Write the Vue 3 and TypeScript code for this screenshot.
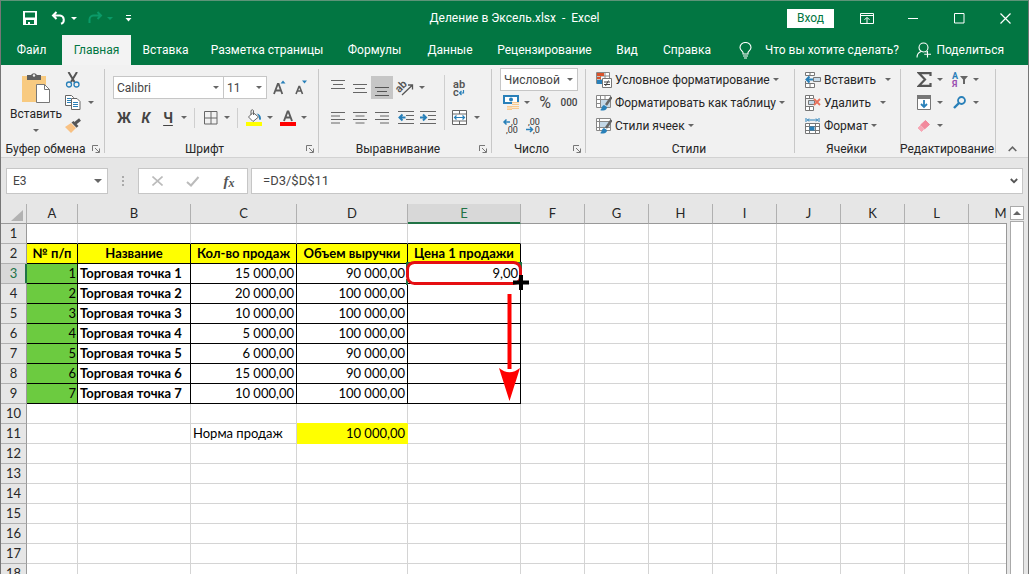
<script setup lang="ts">
import { ref } from 'vue'

interface Cell {
  text: string
  kind: string
}

const tabs: string[] = ['Файл', 'Главная', 'Вставка', 'Разметка страницы', 'Формулы', 'Данные', 'Рецензирование', 'Вид', 'Справка']
const activeTab = ref('Главная')
const nameBox = ref('E3')
const formula = ref('=D3/$D$11')

const columns: string[] = ['A', 'B', 'C', 'D', 'E', 'F', 'G', 'H', 'I', 'J', 'K', 'L', 'M']
const headings: string[] = ['№ п/п', 'Название', 'Кол-во продаж', 'Объем выручки', 'Цена 1 продажи']
const sales: [string, string][] = [
  ['15 000,00', '90 000,00'],
  ['20 000,00', '100 000,00'],
  ['10 000,00', '100 000,00'],
  ['5 000,00', '100 000,00'],
  ['6 000,00', '90 000,00'],
  ['15 000,00', '90 000,00'],
  ['10 000,00', '100 000,00'],
]

function cellAt(row: number, col: number): Cell {
  if (row === 1 && col < 5) return { text: '', kind: 'above' }
  if (row === 2 && col < 5) return { text: headings[col], kind: 'boxed heading' }
  if (row >= 3 && row <= 9 && col < 5) {
    const n = row - 2
    if (col === 0) return { text: String(n), kind: 'boxed index' }
    if (col === 1) return { text: `Торговая точка ${n}`, kind: 'boxed place' }
    if (col === 4) return { text: n === 1 ? '9,00' : '', kind: 'boxed number' }
    return { text: sales[n - 1][col - 2], kind: 'boxed number' }
  }
  if (row === 11 && col === 2) return { text: 'Норма продаж', kind: 'label' }
  if (row === 11 && col === 3) return { text: '10 000,00', kind: 'norm number' }
  if (row === 10 && col === 3) return { text: '', kind: 'abovenorm' }
  return { text: '', kind: '' }
}
</script>

<template>
  <div class="window">
    <header class="titlebar">
      <div class="quick">
        <button class="tool" aria-label="Сохранить">
          <svg width="14" height="14" viewBox="0 0 14 14"><path d="M0 0h14v14H0z M2 1.500v5h10v-5z M3 9v4h2v-2h2v2h4V9z" fill="#fff" fill-rule="evenodd" /></svg>
        </button>
        <button class="tool history" aria-label="Отменить">
          <svg width="16" height="14" viewBox="0 0 16 14"><path d="M5.500 1 2 4.500 5.500 8M2.500 4.500H9a4.300 4.300 0 0 1 1 8.300" fill="none" stroke="#fff" stroke-width="2" /></svg>
          <span class="caret light"></span>
        </button>
        <button class="tool history" aria-label="Повторить">
          <svg width="16" height="14" viewBox="0 0 16 14"><path d="M10.500 1 14 4.500 10.500 8M13.500 4.500H7a4.300 4.300 0 0 0-4.500 4V12" fill="none" stroke="#0b9a68" stroke-width="2" /></svg>
          <span class="caret faded"></span>
        </button>
        <button class="tool customise" aria-label="Настройка панели">
          <svg width="7" height="7" viewBox="0 0 7 7"><path d="M1 0h5v1H1zM0.500 3h6L3.500 6.500z" fill="#fff" /></svg>
        </button>
      </div>
      <div class="doc-title">Деление в Эксель.xlsx&nbsp; -&nbsp; Excel</div>
      <div class="controls">
        <button class="signin">Вход</button>
        <button class="wbtn" aria-label="Параметры ленты">
          <svg width="14" height="11" viewBox="0 0 14 11"><path d="M.5.5h13v10H.5zM.5 2.500h13M7 10V5M4.500 6.800 7 4.300l2.500 2.500" fill="none" stroke="#fff" /></svg>
        </button>
        <button class="wbtn" aria-label="Свернуть"><svg width="10" height="11"><path d="M0 5.500h10" stroke="#fff" /></svg></button>
        <button class="wbtn" aria-label="Развернуть"><svg width="11" height="11"><path d="M.5.5h9.500v9.500H.5z" fill="none" stroke="#fff" /></svg></button>
        <button class="wbtn" aria-label="Закрыть"><svg width="11" height="11"><path d="M.5.5l10 10M10.500.5l-10 10" stroke="#fff" stroke-width="1.200" /></svg></button>
      </div>
    </header>

    <div class="tabbar">
      <nav class="tabs">
        <button v-for="tab in tabs" :key="tab" class="tab" :class="{ active: tab === activeTab }" @click="activeTab = tab">{{ tab }}</button>
      </nav>
      <button class="tell">
        <svg width="13" height="17" viewBox="0 0 13 17"><path d="M4 12V10.500C3.500 9 1 8 1 5.500a5.500 5 0 0 1 11 0C12 8 9.500 9 9 10.500V12zM4 14h5M5 16h3" fill="none" stroke="#fff" stroke-width="1.100" /></svg>
        <span>Что вы хотите сделать?</span>
      </button>
      <button class="share">
        <svg width="16" height="16" viewBox="0 0 16 16"><circle cx="7.500" cy="5.500" r="4.500" fill="none" stroke="#fff" stroke-width="1.100" /><path d="M1 15.500c0-3 1.500-5 4-6M9.500 9.500l1 .7M11.500 9v6.500M8.200 12.300h6.800" fill="none" stroke="#fff" stroke-width="1.100" /></svg>
        <span>Поделиться</span>
      </button>
    </div>

    <div class="ribbon">
      <section class="group clipboard">
        <div class="body">
          <button class="paste">
            <svg width="28" height="30" viewBox="0 0 28 30"><path d="M0 3h24v26H0z" fill="#f8ca80" /><path d="M5 2h4a3.500 3.500 0 0 1 6 0h4v5H5z" fill="#5f5f5f" /><circle cx="12" cy="2.500" r="1.200" fill="#f1f1f1" /><path d="M14.500 11.500h8l5 5v13h-13z" fill="#fff" stroke="#777" /><path d="M22.500 11.500v5h5" fill="none" stroke="#777" /></svg>
            <span>Вставить</span>
            <span class="caret"></span>
          </button>
          <div class="stack">
            <div class="line">
              <button class="tool" aria-label="Вырезать"><svg width="16" height="16" viewBox="0 0 16 16"><path d="M3.500 0 9.500 10M12 0 6 10" stroke="#555" stroke-width="2" /><circle cx="4" cy="12.500" r="2.500" fill="none" stroke="#2980b9" stroke-width="1.300" /><circle cx="11.500" cy="12.500" r="2.500" fill="none" stroke="#2980b9" stroke-width="1.300" /></svg></button>
            </div>
            <div class="line">
              <button class="tool" aria-label="Копировать"><svg width="16" height="15" viewBox="0 0 16 15"><path d="M.5.5h6l2 2v8h-8z" fill="#fff" stroke="#666" /><path d="M2 3.500h4M2 5.500h4M2 7.500h4" stroke="#2980b9" /><path d="M6.500 3.500h5.500l3 3v8H6.500z" fill="#fff" stroke="#666" /><path d="M8 7.500h5M8 9.500h5M8 11.500h5" stroke="#2980b9" /></svg></button>
              <button class="drop" aria-label="Копировать: параметры"><span class="caret"></span></button>
            </div>
            <div class="line">
              <button class="tool" aria-label="Формат по образцу"><svg width="16" height="15" viewBox="0 0 16 15"><path d="M0 9 6 5l5 5-5 5z" fill="#f8c183" /><path d="M6.500 4.500 8.500 3l5 5-2 1.800z" fill="#555" /><path d="m10 5.500 5-4" stroke="#555" stroke-width="3" /></svg></button>
            </div>
          </div>
        </div>
        <div class="foot"><span>Буфер обмена</span><button class="launch" aria-label="Буфер обмена: параметры"><svg width="8" height="8" viewBox="0 0 8 8"><path d="M.5 6V.5H6M3 3l4 4M7.500 3.500v4h-4" fill="none" stroke="#777" /></svg></button></div>
      </section>

      <section class="group font">
        <div class="body rows">
          <div class="line">
            <label class="combo family"><select aria-label="Шрифт"><option>Calibri</option></select><span class="caret"></span></label>
            <label class="combo size"><select aria-label="Размер шрифта"><option>11</option></select><span class="caret"></span></label>
            <button class="tool" aria-label="Увеличить размер"><svg width="13" height="16" viewBox="0 0 13 16"><path d="M1 14 4.800 4h.8L9.300 14M2.500 10.500h5.500" fill="none" stroke="#5c5c5c" stroke-width="1.800" /><path d="M7.500 3.500 10 .5 12.500 3.500z" fill="#2980b9" /></svg></button>
            <button class="tool" aria-label="Уменьшить размер"><svg width="12" height="16" viewBox="0 0 12 16"><path d="M1 14 4 6.500h.600L7.500 14M2.300 11h4" fill="none" stroke="#5c5c5c" stroke-width="1.600" /><path d="M7 .5 9.500 3.500 12 .5z" fill="#2980b9" /></svg></button>
          </div>
          <div class="line">
            <button class="tool letter">Ж</button>
            <button class="tool letter italic">К</button>
            <button class="tool letter under">Ч</button>
            <button class="drop" aria-label="Подчёркивание"><span class="caret"></span></button>
            <i class="sep"></i>
            <button class="tool" aria-label="Границы"><svg width="14" height="14"><path d="M.5.5h12.500v12.500H.5zM7 0v13M0 7h13" fill="none" stroke="#666" /></svg></button>
            <button class="drop" aria-label="Виды границ"><span class="caret"></span></button>
            <i class="sep"></i>
            <button class="tool" aria-label="Цвет заливки"><svg width="16" height="17" viewBox="0 0 16 17"><path d="M7 3.500 12.500 8 7 12.500 2.500 8z" fill="#fff" stroke="#666" /><path d="M5 6V1.500q1.500-1.500 2.500 0V6" fill="none" stroke="#666" /><path d="M10.500 4.500Q15 5 15 10q-1 2-2 0 .5-3-2.500-5.500z" fill="#2980b9" /><path d="M0 13h16v4H0z" fill="#ff0" /></svg></button>
            <button class="drop" aria-label="Выбор заливки"><span class="caret"></span></button>
            <button class="tool late" aria-label="Цвет шрифта"><svg width="16" height="16" viewBox="0 0 16 16"><path d="M4 11 7.600 1.500h.8L12 11M5.300 7.500h5.400" fill="none" stroke="#5c5c5c" stroke-width="1.900" /><path d="M0 12h16v4H0z" fill="#f00" /></svg></button>
            <button class="drop" aria-label="Выбор цвета"><span class="caret"></span></button>
          </div>
        </div>
        <div class="foot"><span>Шрифт</span><button class="launch" aria-label="Шрифт: параметры"><svg width="8" height="8" viewBox="0 0 8 8"><path d="M.5 6V.5H6M3 3l4 4M7.500 3.500v4h-4" fill="none" stroke="#777" /></svg></button></div>
      </section>

      <section class="group align">
        <div class="body">
          <div class="rows">
            <div class="line">
              <button class="tool" aria-label="По верхнему краю"><svg width="14" height="16"><path d="M0 .5h14M2 4.500h10M0 8.500h14" stroke="#666" /></svg></button>
              <button class="tool" aria-label="По середине"><svg width="14" height="16"><path d="M0 4.500h14M2 8.500h10M0 12.500h14" stroke="#666" /></svg></button>
              <button class="tool pressed" aria-label="По нижнему краю"><svg width="14" height="16"><path d="M0 7.500h14M2 11.500h10M0 15.500h14" stroke="#555" /></svg></button>
              <button class="tool late" aria-label="Ориентация"><svg class="glyphs" width="18" height="18" viewBox="0 0 18 18"><path d="M5 16 15 6.500M15.500 10.500V6h-4.500" fill="none" stroke="#555" stroke-width="1.300" /><text x="0" y="11" transform="rotate(-45 5 10)" font-size="11" font-weight="600" fill="#555">ab</text></svg></button>
              <button class="drop" aria-label="Виды ориентации"><span class="caret"></span></button>
            </div>
            <div class="line">
              <button class="tool" aria-label="По левому краю"><svg width="14" height="12"><path d="M0 .5h14M0 4h9M0 7.500h14M0 11h9" stroke="#666" /></svg></button>
              <button class="tool" aria-label="По центру"><svg width="14" height="12"><path d="M0 .5h14M2.500 4h9M0 7.500h14M2.500 11h9" stroke="#666" /></svg></button>
              <button class="tool" aria-label="По правому краю"><svg width="14" height="12"><path d="M0 .5h14M5 4h9M0 7.500h14M5 11h9" stroke="#666" /></svg></button>
              <button class="tool late" aria-label="Уменьшить отступ"><svg width="16" height="13"><path d="M0 .5h16M8 4.500h8M8 8.500h8M0 12.500h16" stroke="#666" /><path d="M7.500 6.500H2M4.500 3.500l-3 3 3 3" fill="none" stroke="#2980b9" stroke-width="2" /></svg></button>
              <button class="tool" aria-label="Увеличить отступ"><svg width="16" height="13"><path d="M0 .5h16M8 4.500h8M8 8.500h8M0 12.500h16" stroke="#666" /><path d="M0 6.500h5.500M3 3.500l3 3-3 3" fill="none" stroke="#2980b9" stroke-width="2" /></svg></button>
            </div>
          </div>
          <i class="tall"></i>
          <div class="rows">
            <div class="line">
              <button class="tool" aria-label="Перенести текст"><svg class="glyphs" width="14" height="18" viewBox="0 0 14 18"><text x="1" y="9" font-size="11" font-weight="600" fill="#555">ab</text><text x="1" y="17" font-size="11" font-weight="600" fill="#555">c</text><path d="M11.500 11v3H8M9.500 12l-2 2 2 2" fill="none" stroke="#2980b9" stroke-width="1.200" /></svg></button>
            </div>
            <div class="line">
              <button class="tool" aria-label="Объединить"><svg width="15" height="15" viewBox="0 0 15 15"><path d="M.5.5h14v14H.5zM.5 4h14M.5 11h14M7.500 0v4M7.500 11v4" fill="#fff" stroke="#666" /><path d="M2 7.500h11M4.500 5.500l-2 2 2 2M10.500 5.500l2 2-2 2" fill="none" stroke="#2980b9" stroke-width="1.200" /></svg></button>
              <button class="drop merge" aria-label="Виды объединения"><span class="caret"></span></button>
            </div>
          </div>
        </div>
        <div class="foot"><span>Выравнивание</span><button class="launch" aria-label="Выравнивание: параметры"><svg width="8" height="8" viewBox="0 0 8 8"><path d="M.5 6V.5H6M3 3l4 4M7.500 3.500v4h-4" fill="none" stroke="#777" /></svg></button></div>
      </section>

      <section class="group num">
        <div class="body stack">
          <label class="combo format"><select aria-label="Числовой формат"><option>Числовой</option></select><span class="caret"></span></label>
          <div class="line">
            <button class="tool" aria-label="Денежный формат"><svg width="17" height="16" viewBox="0 0 17 16"><path d="M1 1h14v7H1z" fill="#fff" stroke="#2980b9" stroke-width="2" /><circle cx="8" cy="4.500" r="2" fill="#2980b9" /><path d="M9 7h7v3H9zM9 11h7v3H9zM4 11h5v4H4z" fill="#f8ca90" /><path d="M9 8.500h7M9 12.500h7M4 13h5" stroke="#fff" stroke-width=".6" /></svg></button>
            <button class="drop" aria-label="Валюта"><span class="caret"></span></button>
            <button class="tool percent">%</button>
            <button class="tool zeros">000</button>
          </div>
          <div class="line">
            <button class="tool" aria-label="Увеличить разрядность"><svg class="glyphs" width="16" height="16" viewBox="0 0 16 16"><path d="M7 4H1.500M3.500 1.500 1 4l2.500 2.500" fill="none" stroke="#2980b9" stroke-width="1.500" /><text x="8" y="7" font-size="9" fill="#333">,0</text><text x="3" y="15" font-size="9" fill="#333">,00</text></svg></button>
            <button class="tool" aria-label="Уменьшить разрядность"><svg class="glyphs" width="16" height="16" viewBox="0 0 16 16"><text x="3" y="7" font-size="9" fill="#333">,00</text><path d="M1 11.500h6M5 9l2.500 2.500L5 14" fill="none" stroke="#2980b9" stroke-width="1.500" /><text x="8" y="15" font-size="9" fill="#333">,0</text></svg></button>
          </div>
        </div>
        <div class="foot"><span>Число</span><button class="launch" aria-label="Число: параметры"><svg width="8" height="8" viewBox="0 0 8 8"><path d="M.5 6V.5H6M3 3l4 4M7.500 3.500v4h-4" fill="none" stroke="#777" /></svg></button></div>
      </section>

      <section class="group styles">
        <div class="body stack">
          <button class="command"><svg width="16" height="16" viewBox="0 0 16 16"><path d="M.5.5h13v11H.5zM.5 4h13M.5 8h13M4.500 0v12M9 0v12" fill="#fff" stroke="#888" /><path d="M1 1h7v3H1z" fill="#d9532c" /><path d="M1 5h4v2H1z" fill="#d9532c" /><path d="M1 8h6v4H1z" fill="#2980b9" /><path d="M6.500 6.500h9v9h-9z" fill="#fff" stroke="#777" /><path d="M8 10h6M8 12.500h6M12.500 8.500l-3 5.500" stroke="#444" /></svg><span>Условное форматирование</span><span class="caret"></span></button>
          <button class="command"><svg width="16" height="16" viewBox="0 0 16 16"><path d="M.5.5h14v12H.5zM.5 4.500h14M.5 8.500h14M4.500 0v13M9 0v13" fill="#fff" stroke="#888" /><path d="M5 5h9v7H5z" fill="#c3d8e8" /><path d="M15.500 2 10 10" stroke="#666" stroke-width="2.500" /><path d="M4 15c2 0 1-4 4-5l3 2c0 4-5 4-7 3z" fill="#2980b9" /></svg><span>Форматировать как таблицу</span><span class="caret"></span></button>
          <button class="command"><svg width="16" height="16" viewBox="0 0 16 16"><path d="M.5.5h14v12H.5zM.5 3.500h14M.5 9.500h14M3.500 0v13" fill="#fff" stroke="#888" /><path d="M4 4h10v5H4z" fill="#c3d8e8" /><path d="M15.500 2 10 10" stroke="#666" stroke-width="2.500" /><path d="M4 15c2 0 1-4 4-5l3 2c0 4-5 4-7 3z" fill="#2980b9" /></svg><span>Стили ячеек</span><span class="caret"></span></button>
        </div>
        <div class="foot"><span>Стили</span></div>
      </section>

      <section class="group cells">
        <div class="body stack">
          <button class="command insert"><svg width="16" height="16" viewBox="0 0 16 16"><path d="M.5.5h9v3h-9zM5 0v4M.5 11.500h9v4h-9zM5 11v5M.5 9v3" fill="#fff" stroke="#777" /><path d="M8.500 5.500h7v4h-7z" fill="#c5d9e8" stroke="#777" /><path d="M8 7.500H2M4.500 4.500l-3 3 3 3" fill="none" stroke="#2980b9" stroke-width="2" /></svg><span>Вставить</span><span class="caret"></span></button>
          <button class="command insert"><svg width="16" height="16" viewBox="0 0 16 16"><path d="M.5.5h8v3h-8zM4.500 0v4M.5 11.500h8v4h-8zM4.500 11v5M.5 3v9" fill="#fff" stroke="#777" /><path d="M3.500 5.500h6v4h-6z" fill="#c5d9e8" stroke="#777" /><path d="m9 4 6 6M15 4 9 10" stroke="#e8705a" stroke-width="1.800" /></svg><span>Удалить</span><span class="caret"></span></button>
          <button class="command"><svg width="16" height="16" viewBox="0 0 16 16"><path d="M1 0v4M14 0v4M2 2h11M4 .5 2.500 2 4 3.500M11 .5 12.500 2 11 3.500" fill="none" stroke="#2980b9" /><path d="M.5 5.500h14v10H.5zM.5 8.500h14M.5 12.500h14M4.500 5v11M10.500 5v11" fill="#fff" stroke="#777" /><path d="M4.500 8.500h5v4h-5z" fill="#2980b9" /></svg><span>Формат</span><span class="caret"></span></button>
        </div>
        <div class="foot"><span>Ячейки</span></div>
      </section>

      <section class="group edit">
        <div class="body stack">
          <div class="line">
            <button class="tool" aria-label="Сумма"><svg width="15" height="15" viewBox="0 0 15 15"><path d="M13.500 4V1.200H2L8 7.500 2 13.800h11.500V11" fill="none" stroke="#555" stroke-width="2.200" /></svg></button>
            <button class="drop" aria-label="Виды суммы"><span class="caret"></span></button>
            <button class="tool" aria-label="Сортировка"><svg class="glyphs" width="16" height="17" viewBox="0 0 16 17"><text x="0" y="8" font-size="9" font-weight="700" fill="#2980b9">А</text><text x="0" y="16" font-size="9" font-weight="700" fill="#9a4fb0">Я</text><path d="M8 5h8l-3 3.500V13h-2V8.500z" fill="#666" /></svg></button>
            <button class="drop" aria-label="Виды сортировки"><span class="caret"></span></button>
          </div>
          <div class="line">
            <button class="tool" aria-label="Заполнить"><svg width="14" height="15" viewBox="0 0 14 15"><path d="M.5.5h13v14H.5z" fill="#fff" stroke="#777" /><path d="M0 0h14v4H0z" fill="#777" /><path d="M7 5v7M4 9l3 3 3-3" fill="none" stroke="#2980b9" stroke-width="1.800" /></svg></button>
            <button class="drop" aria-label="Виды заполнения"><span class="caret"></span></button>
            <button class="tool" aria-label="Найти"><svg width="14" height="13" viewBox="0 0 14 13"><circle cx="8.500" cy="4.500" r="3.500" fill="none" stroke="#2980b9" stroke-width="1.800" /><path d="m6 7-5 5" stroke="#2980b9" stroke-width="2.400" /></svg></button>
            <button class="drop" aria-label="Виды поиска"><span class="caret"></span></button>
          </div>
          <div class="line">
            <button class="tool" aria-label="Очистить"><svg width="14" height="14" viewBox="0 0 14 14"><path d="m8.500 1.500 4 4-5 4.500-4-4z" fill="#f2899c" stroke="#f2899c" stroke-linejoin="round" /><path d="m3 7 3.500 3.500L4.500 12.500 1 9z" fill="#f7a8b6" stroke="#f7a8b6" stroke-linejoin="round" /></svg></button>
            <button class="drop" aria-label="Виды очистки"><span class="caret"></span></button>
          </div>
        </div>
        <div class="foot"><span>Редактирование</span></div>
      </section>

      <button class="collapse" aria-label="Свернуть ленту"><svg width="9" height="6"><path d="M.7 5 4.500 1.200 8.300 5" fill="none" stroke="#666" stroke-width="1.600" /></svg></button>
    </div>

    <div class="formula-bar">
      <div class="name-box">
        <input v-model="nameBox" aria-label="Имя ячейки" />
        <button class="drop" aria-label="Список имён"><span class="caret big"></span></button>
      </div>
      <svg class="dots" width="2" height="11"><path d="M0 0h2v2H0zM0 4h2v2H0zM0 8h2v2H0z" fill="#aaa" /></svg>
      <div class="actions">
        <button aria-label="Отмена"><svg width="11" height="10"><path d="M.5.5l10 9M10.500.5l-10 9" stroke="#bbb" stroke-width="1.600" /></svg></button>
        <button aria-label="Ввод"><svg width="14" height="11"><path d="m1 6 4 3.500L12.500 1" fill="none" stroke="#bbb" stroke-width="2" /></svg></button>
        <button class="fx" aria-label="Вставить функцию">f<small>x</small></button>
      </div>
      <div class="formula">
        <input v-model="formula" aria-label="Строка формул" />
        <button aria-label="Развернуть строку формул"><svg width="8" height="6"><path d="M.8 1 4 4.200 7.200 1" fill="none" stroke="#555" stroke-width="1.800" /></svg></button>
      </div>
    </div>

    <main class="workspace">
      <div class="sheet">
        <table>
          <colgroup>
            <col class="c-head" /><col class="c-a" /><col class="c-b" /><col class="c-c" /><col class="c-d" /><col class="c-e" /><col v-for="n in 8" :key="n" class="c-rest" />
          </colgroup>
          <thead>
            <tr>
              <th class="corner"><svg width="12" height="11"><path d="M12 0v11H0z" fill="#b2b2b2" /></svg></th>
              <th v-for="name in columns" :key="name" scope="col" :class="{ current: name === 'E' }">{{ name }}</th>
            </tr>
          </thead>
          <tbody>
            <tr v-for="row in 18" :key="row">
              <th scope="row" :class="{ current: row === 3 }">{{ row }}</th>
              <td v-for="(name, col) in columns" :key="name" :class="cellAt(row, col).kind">{{ cellAt(row, col).text }}</td>
            </tr>
          </tbody>
        </table>
        <svg class="marks" width="130" height="150" viewBox="0 0 130 150">
          <path d="M6 6h10M6 5v7M6 28v-6M120 5v7M119 6h-6" stroke="#217346" stroke-width="2" />
          <rect x="6.500" y="5.500" width="113" height="21" rx="7" fill="none" stroke="#e50e12" stroke-width="3" />
          <path d="M106.500 37v75h4V37z" fill="#f00" />
          <path d="M98 111q10.500 8.500 21 0L108.500 144z" fill="#f00" />
          <path d="M118 18h4v5.500h6v4h-6V33h-4v-5.500h-6v-4h6z" fill="#000" />
        </svg>
      </div>
      <div class="scroll">
        <button aria-label="Прокрутить вверх"><svg width="8" height="4"><path d="M4 0 8 4H0z" fill="#666" /></svg></button>
        <div class="track"></div>
      </div>
    </main>
  </div>
</template>

<style>
body {
  margin: 0;
  overflow: hidden;
}
</style>

<style scoped>
.window {
  box-sizing: border-box;
  display: flex;
  flex-direction: column;
  height: 100vh;
  border: 1px solid #767676;
  border-top-color: #5d9478;
  border-bottom: 0;
  background: #e6e6e6;
  color: #262626;
  font: 12px/16px Roboto, "Open Sans", sans-serif;
  overflow: hidden;
}
button,
input,
select {
  margin: 0;
  padding: 0;
  border: 0;
  border-radius: 0;
  background: none;
  color: inherit;
  font: inherit;
}
svg {
  display: block;
  flex: none;
}
.glyphs { overflow: visible; }
.caret {
  flex: none;
  width: 0;
  border: 3px solid transparent;
  border-top-color: #666;
  border-bottom: 0;
}
.caret.light { border-top-color: #fff; }
.caret.faded { border-top-color: #0b9a68; }
.caret.big { border-width: 4px 4px 0; }

.titlebar {
  display: grid;
  grid-template-columns: 1fr auto 1fr;
  align-items: center;
  height: 34px;
  background: #027642;
  color: #fff;
}
.quick {
  display: flex;
  align-items: center;
  padding-left: 18px;
}
.tool {
  display: flex;
  flex: none;
  align-items: center;
  justify-content: center;
  width: 22px;
  height: 23px;
}
.history {
  justify-content: flex-start;
  gap: 4px;
  width: 36px;
  padding-left: 10px;
}
.customise { margin-left: 4px; }
.controls {
  display: flex;
  align-items: center;
  justify-content: flex-end;
}
.signin {
  width: 47px;
  height: 19px;
  margin-right: 10px;
  background: #fff;
  color: #027642;
}
.wbtn {
  display: flex;
  align-items: center;
  justify-content: center;
  width: 46px;
  height: 32px;
}

.tabbar {
  display: flex;
  align-items: stretch;
  height: 30px;
  background: #027642;
  color: #fff;
}
.tabs {
  display: grid;
  grid-template-columns: 61px 69px 69px 134px 81px 70px 119px 46px 74px;
}
.tab.active {
  background: #f3f3f3;
  color: #027642;
}
.tell,
.share {
  display: flex;
  align-items: center;
  gap: 13px;
  white-space: nowrap;
}
.tell { margin-left: 15px; }
.share {
  gap: 4px;
  margin-left: auto;
  padding-right: 24px;
}

.ribbon {
  display: flex;
  background: #f1f1f1;
  border-bottom: 1px solid #d2d2d2;
}
.group {
  position: relative;
  display: flex;
  flex-direction: column;
  flex: none;
  box-sizing: border-box;
}
.group::after {
  content: "";
  position: absolute;
  top: 4px;
  right: 0;
  bottom: 4px;
  width: 1px;
  background: #c8c8c8;
}
.clipboard { width: 104px; }
.font { width: 214px; }
.align { width: 173px; }
.num { width: 94px; }
.styles { width: 209px; }
.cells { width: 106px; }
.edit { width: 95px; }
.body {
  box-sizing: border-box;
  display: flex;
  height: 75px;
}
.foot {
  display: flex;
  align-items: center;
  justify-content: center;
  height: 17px;
  padding-right: 3px;
  white-space: nowrap;
}
.foot span {
  flex: 1;
  text-align: center;
}
.launch {
  width: 12px;
  padding-left: 2px;
}
.line {
  display: flex;
  align-items: center;
  height: 23px;
}
.stack {
  display: flex;
  flex-direction: column;
  padding-top: 3px;
}
.rows {
  display: flex;
  flex-direction: column;
  gap: 7px;
  padding-top: 11px;
}
.drop {
  display: flex;
  align-items: center;
  justify-content: center;
  width: 10px;
  height: 22px;
}
.paste {
  display: flex;
  flex-direction: column;
  align-items: center;
  width: 61px;
  padding: 8px 0 0 9px;
  gap: 3px;
}
.paste .caret { margin-top: 4px; }
.clipboard .drop { margin-left: 2px; }
.body.rows { padding-left: 8px; }
.combo {
  display: grid;
  box-sizing: border-box;
  align-items: center;
  height: 23px;
  border: 1px solid #c6c6c6;
  background: #fff;
  color: #444;
}
.combo > * { grid-area: 1 / 1; }
.combo select {
  appearance: none;
  width: 100%;
  height: 21px;
  padding-left: 3px;
  outline: 0;
}
.combo .caret {
  justify-self: end;
  margin-right: 4px;
  pointer-events: none;
}
.family { width: 111px; }
.size {
  width: 43px;
  border-left: 0;
}
.size + .tool { margin-left: 1px; }
.letter {
  color: #444;
  font-size: 14px;
  font-weight: 700;
}
.italic { font-style: italic; }
.under { text-decoration: underline; text-underline-offset: 2px; }
.sep {
  width: 1px;
  height: 20px;
  margin: 0 5px;
  background: #cfcfcf;
}
.late { margin-left: 2px; }
.align .rows:first-child { padding-left: 8px; }
.pressed { background: #c6c6c6; }
.tall {
  width: 1px;
  height: 55px;
  margin: 10px 3px 0 auto;
  background: #cfcfcf;
}
.align .rows:last-child { width: 44px; }
.merge { margin-left: 2px; }
.num .stack { padding-left: 8px; }
.format { width: 78px; }
.percent {
  width: 26px;
  color: #444;
  font-size: 16px;
}
.zeros {
  color: #444;
  font-size: 10px;
  font-weight: 500;
}
.styles .stack,
.cells .stack { padding-left: 10px; }
.command {
  display: flex;
  align-items: center;
  height: 23px;
  gap: 3px;
  white-space: nowrap;
}
.insert .caret { margin-left: 6px; }
.edit .stack { padding-left: 12px; }
.edit .drop { margin-right: 4px; }
.collapse {
  display: flex;
  flex: 1;
  align-items: flex-end;
  justify-content: center;
  padding-bottom: 5px;
}

.formula-bar {
  display: flex;
  align-items: center;
  padding: 10px 5px;
}
.name-box,
.actions,
.formula {
  display: flex;
  align-items: center;
  box-sizing: border-box;
  height: 26px;
  border: 1px solid #c6c6c6;
  background: #fff;
  color: #444;
}
.name-box { width: 102px; padding: 0 4px 0 6px; }
.name-box input,
.formula input {
  flex: 1;
  min-width: 0;
  outline: 0;
}
.dots { margin: 0 14px; }
.actions {
  justify-content: space-around;
  width: 110px;
}
.actions button {
  display: flex;
  align-items: center;
  justify-content: center;
  width: 34px;
  height: 24px;
}
.fx {
  color: #555;
  font: italic 700 15px/20px "Liberation Serif", serif;
}
.fx small { font-size: 12px; padding-top: 4px; }
.formula {
  flex: 1;
  margin-left: 3px;
  padding: 0 4px 0 11px;
  font-size: 13px;
}

.workspace {
  display: flex;
  flex: 1;
  min-height: 0;
}
.sheet {
  position: relative;
  flex: 1;
  min-width: 0;
  overflow: hidden;
}
.sheet::after {
  content: "";
  position: absolute;
  top: 20px;
  right: 0;
  bottom: 0;
  width: 1px;
  background: #999;
}
table {
  width: 1032px;
  table-layout: fixed;
  border-spacing: 0;
  background: #fff;
  font: 13px/19px Lato, "Open Sans", sans-serif;
}
.c-head { width: 26px; }
.c-a { width: 51px; }
.c-b { width: 113px; }
.c-c { width: 106px; }
.c-d { width: 111px; }
.c-e { width: 113px; }
.c-rest { width: 64px; }
th,
td {
  height: 19px;
  padding: 0;
  border: 0 solid #d4d4d4;
  border-width: 0 1px 1px 0;
  white-space: nowrap;
  color: #000;
}
th {
  background: #e6e6e6;
  border-color: #b0b0b0;
  color: #262626;
  font-weight: 400;
  font-size: 13px;
}
thead th { border-bottom-color: #999; }
tbody th { border-right-color: #999; }
.corner svg { margin: 4px 0 0 10px; }
th.current {
  background: #d8d8d8;
  color: #217346;
}
thead th.current { border-bottom-color: #217346; box-shadow: inset 0 -1px #217346; }
tbody th.current { border-right-color: #217346; box-shadow: inset -1px 0 #217346; }
.above { border-bottom-color: #000; }
.boxed { border-color: #000; }
.heading {
  background: #ff0;
  font-weight: 700;
  text-align: center;
}
.index {
  background: #6ccb40;
  text-align: right;
  padding-right: 1px;
}
.place {
  padding-left: 2px;
  font-weight: 700;
}
.label { padding-left: 2px; }
.number {
  padding-right: 2px;
  text-align: right;
}
.norm {
  background: #ff0;
  border-color: #ff0;
}
.abovenorm { border-bottom-color: #ff0; }
.marks {
  position: absolute;
  top: 53px;
  left: 400px;
}
.scroll {
  display: flex;
  flex-direction: column;
  gap: 1px;
  width: 14px;
  margin: 2px 4px 0 3px;
}
.scroll button {
  display: flex;
  align-items: center;
  justify-content: center;
  box-sizing: border-box;
  height: 14px;
  border: 1px solid #aaa;
  background: #fff;
}
.track {
  flex: 1;
  border: 1px solid #aaa;
  border-bottom: 0;
  background: #fff;
}
</style>
